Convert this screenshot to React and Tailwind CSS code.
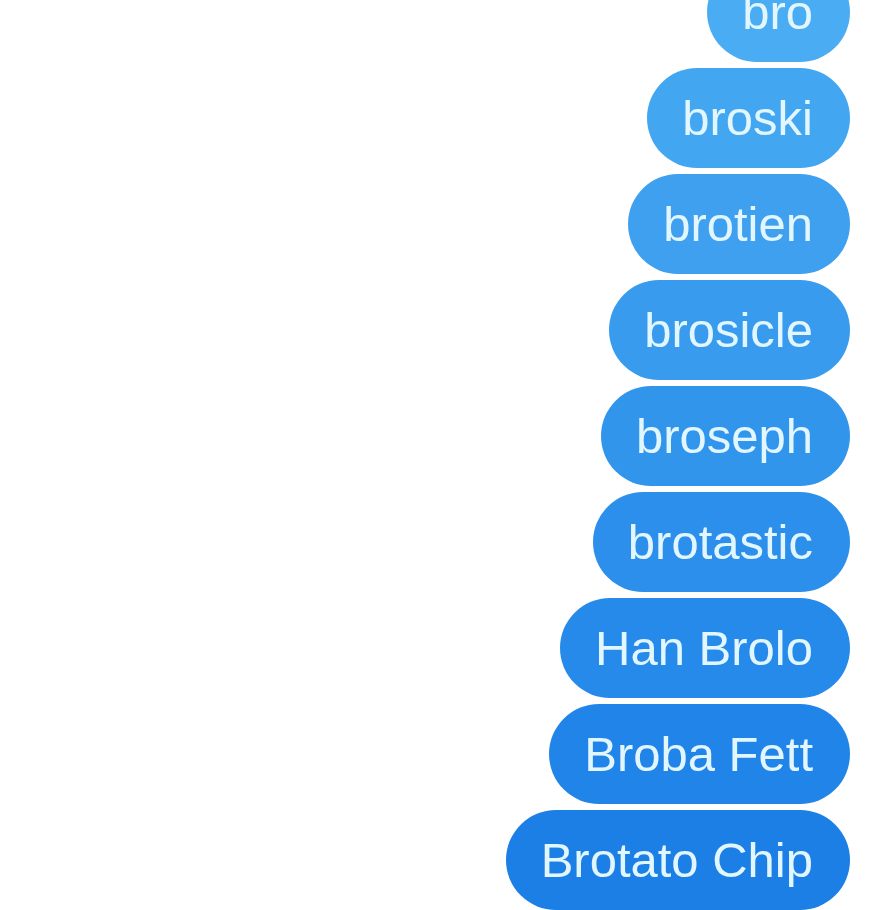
import React from 'react';

const bubbles = [
    { text: 'bro', color: 'bg-[#4aacf2]' },
    { text: 'broski', color: 'bg-[#43a6f1]' },
    { text: 'brotien', color: 'bg-[#3ea0ef]' },
    { text: 'brosicle', color: 'bg-[#389bee]' },
    { text: 'broseph', color: 'bg-[#3295ec]' },
    { text: 'brotastic', color: 'bg-[#2c8feb]' },
    { text: 'Han Brolo', color: 'bg-[#268aea]' },
    { text: 'Broba Fett', color: 'bg-[#2084e8]' },
    { text: 'Brotato Chip', color: 'bg-[#1b7fe6]' },
];

const App = () => {
    return (
        <div className="w-[880px] h-[910px] overflow-hidden bg-white font-['Liberation_Sans',Arial,sans-serif]">
            <div className="flex flex-col items-end gap-[6px] pr-[30px] -mt-[38px]">
                {bubbles.map((b) => (
                    <div
                        key={b.text}
                        className={`${b.color} h-[100px] rounded-full pl-[35px] pr-[37px] flex items-center text-[49px] leading-none text-[#e2f6ff] whitespace-nowrap`}
                    >
                        {b.text}
                    </div>
                ))}
            </div>
        </div>
    );
};

export default App;
